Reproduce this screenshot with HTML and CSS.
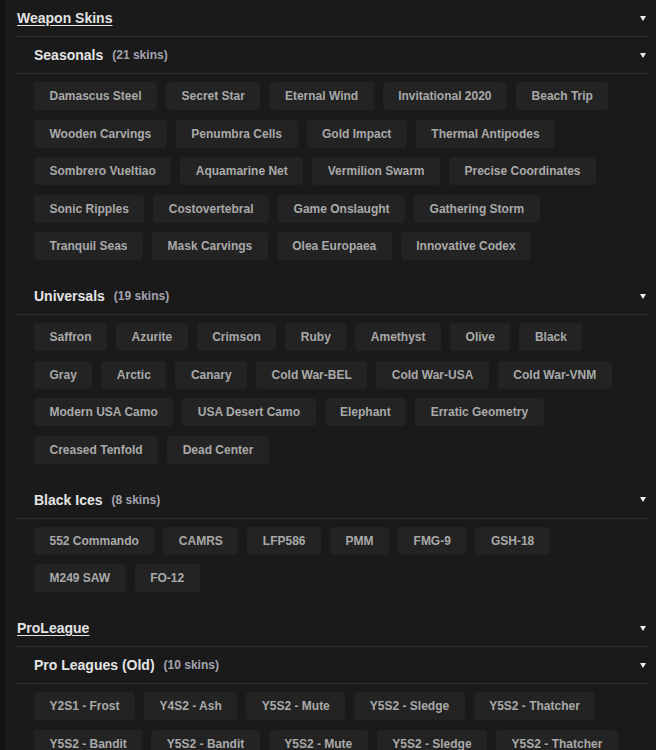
FILE: index.html
```html
<!DOCTYPE html>
<html>
<head>
<meta charset="utf-8">
<link rel="stylesheet" href="styles.css">
</head>
<body>
<div class="page">
  <div class="strip"></div>
  <div class="main">
    <section class="group">
      <div class="group-head"><span class="group-title">Weapon Skins</span><span class="arrow"></span></div>
      <div class="sub">
        <div class="sub-head"><span class="sub-title">Seasonals</span><span class="count">(21 skins)</span><span class="arrow"></span></div>
        <div class="chips">
          <span class="chip">Damascus Steel</span><span class="chip">Secret Star</span><span class="chip">Eternal Wind</span><span class="chip">Invitational 2020</span><span class="chip">Beach Trip</span>
          <span class="chip">Wooden Carvings</span><span class="chip">Penumbra Cells</span><span class="chip">Gold Impact</span><span class="chip">Thermal Antipodes</span>
          <span class="chip">Sombrero Vueltiao</span><span class="chip">Aquamarine Net</span><span class="chip">Vermilion Swarm</span><span class="chip">Precise Coordinates</span>
          <span class="chip">Sonic Ripples</span><span class="chip">Costovertebral</span><span class="chip">Game Onslaught</span><span class="chip">Gathering Storm</span>
          <span class="chip">Tranquil Seas</span><span class="chip">Mask Carvings</span><span class="chip">Olea Europaea</span><span class="chip">Innovative Codex</span>
        </div>
      </div>
      <div class="sub">
        <div class="sub-head"><span class="sub-title">Universals</span><span class="count">(19 skins)</span><span class="arrow"></span></div>
        <div class="chips">
          <span class="chip">Saffron</span><span class="chip">Azurite</span><span class="chip">Crimson</span><span class="chip">Ruby</span><span class="chip">Amethyst</span><span class="chip">Olive</span><span class="chip">Black</span>
          <span class="chip">Gray</span><span class="chip">Arctic</span><span class="chip">Canary</span><span class="chip">Cold War-BEL</span><span class="chip">Cold War-USA</span><span class="chip">Cold War-VNM</span>
          <span class="chip">Modern USA Camo</span><span class="chip">USA Desert Camo</span><span class="chip">Elephant</span><span class="chip">Erratic Geometry</span>
          <span class="chip">Creased Tenfold</span><span class="chip">Dead Center</span>
        </div>
      </div>
      <div class="sub">
        <div class="sub-head"><span class="sub-title">Black Ices</span><span class="count">(8 skins)</span><span class="arrow"></span></div>
        <div class="chips">
          <span class="chip">552 Commando</span><span class="chip">CAMRS</span><span class="chip">LFP586</span><span class="chip">PMM</span><span class="chip">FMG-9</span><span class="chip">GSH-18</span>
          <span class="chip">M249 SAW</span><span class="chip">FO-12</span>
        </div>
      </div>
    </section>
    <section class="group">
      <div class="group-head"><span class="group-title">ProLeague</span><span class="arrow"></span></div>
      <div class="sub">
        <div class="sub-head"><span class="sub-title">Pro Leagues (Old)</span><span class="count">(10 skins)</span><span class="arrow"></span></div>
        <div class="chips">
          <span class="chip">Y2S1 - Frost</span><span class="chip">Y4S2 - Ash</span><span class="chip">Y5S2 - Mute</span><span class="chip">Y5S2 - Sledge</span><span class="chip">Y5S2 - Thatcher</span>
          <span class="chip">Y5S2 - Bandit</span><span class="chip">Y5S2 - Bandit</span><span class="chip">Y5S2 - Mute</span><span class="chip">Y5S2 - Sledge</span><span class="chip">Y5S2 - Thatcher</span>
        </div>
      </div>
    </section>
  </div>
</div>
</body>
</html>
```

FILE: styles.css
```css
html, body {
  margin: 0;
  padding: 0;
  background: #1a1a1a;
  font-family: "Liberation Sans", Arial, sans-serif;
  overflow: hidden;
}

.page {
  display: flex;
  min-height: 750px;
}

.strip {
  width: 5px;
  flex: none;
  background: #121212;
}

.main {
  flex: 1;
  padding: 0 8px 0 11px;
}

.group-head,
.sub-head {
  display: flex;
  align-items: center;
  height: 36px;
  border-bottom: 1px solid #2e2e2e;
  padding-right: 2px;
}

.group-head {
  padding-left: 1px;
}

.group-title {
  font-size: 14px;
  font-weight: bold;
  color: #e2e2e2;
  text-decoration: underline;
  text-underline-offset: 2px;
}

.sub-head {
  padding-left: 18px;
}

.sub-title {
  font-size: 14px;
  font-weight: bold;
  color: #e4e4e4;
}

.count {
  margin-left: 9px;
  font-size: 12px;
  font-weight: bold;
  color: #a4a4b0;
}

.arrow {
  margin-left: auto;
  width: 0;
  height: 0;
  border-left: 3.5px solid transparent;
  border-right: 3.5px solid transparent;
  border-top: 5px solid #eeeeee;
}

.chips {
  display: flex;
  flex-wrap: wrap;
  gap: 9.5px 9px;
  padding: 8px 0 18px 18px;
}

.chip {
  height: 28px;
  line-height: 28px;
  padding: 0 15.5px;
  background: #232323;
  border-radius: 4px;
  font-size: 12px;
  font-weight: bold;
  color: #a9a9a9;
  white-space: nowrap;
}
```
